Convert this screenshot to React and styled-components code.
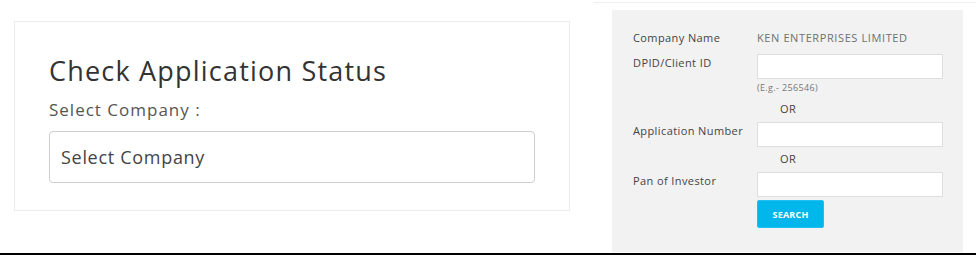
import React from "react";
import styled, { createGlobalStyle } from "styled-components";

const GlobalStyle = createGlobalStyle`
  html, body {
    margin: 0;
    padding: 0;
    background: #ffffff;
  }
  body {
    font-family: "Open Sans", "Liberation Sans", sans-serif;
  }
`;

export default function App() {
  return (
    <>
      <GlobalStyle />
      <Page>
        <LeftCol>
          <StatusCard>
            <Title>Check Application Status</Title>
            <SelectLabel>Select Company :</SelectLabel>
            <SelectBox>Select Company</SelectBox>
          </StatusCard>
        </LeftCol>
        <RightCol>
          <SearchPanel>
            <InfoRow>
              <FieldLabel>Company Name</FieldLabel>
              <CompanyValue>KEN ENTERPRISES LIMITED</CompanyValue>
            </InfoRow>
            <FieldRow $top={9}>
              <FieldLabel $pad>DPID/Client ID</FieldLabel>
              <FieldInput />
            </FieldRow>
            <Hint>(E.g.- 256546)</Hint>
            <OrText $top={8}>OR</OrText>
            <FieldRow $top={6}>
              <FieldLabel $pad>Application Number</FieldLabel>
              <FieldInput />
            </FieldRow>
            <OrText $top={5}>OR</OrText>
            <FieldRow $top={6}>
              <FieldLabel $pad>Pan of Investor</FieldLabel>
              <FieldInput />
            </FieldRow>
            <SearchButton>SEARCH</SearchButton>
          </SearchPanel>
        </RightCol>
      </Page>
    </>
  );
}

const Page = styled.div`
  width: 976px;
  height: 253px;
  display: flex;
  flex-direction: row;
  align-items: flex-start;
  border-bottom: 2px solid #000000;
  box-sizing: content-box;
  overflow: hidden;
`;

const LeftCol = styled.div`
  width: 593px;
  padding: 21px 0 0 14px;
  box-sizing: border-box;
`;

const StatusCard = styled.div`
  width: 556px;
  height: 190px;
  box-sizing: border-box;
  border: 1px solid #ececec;
  padding: 31px 34px 0 34px;
  display: flex;
  flex-direction: column;
`;

const Title = styled.div`
  font-size: 27px;
  line-height: 36px;
  letter-spacing: 1.2px;
  color: #333333;
  white-space: nowrap;
`;

const SelectLabel = styled.div`
  margin-top: 9px;
  font-size: 17px;
  line-height: 24px;
  letter-spacing: 1px;
  color: #555555;
`;

const SelectBox = styled.div`
  margin-top: 9px;
  height: 52px;
  box-sizing: border-box;
  border: 1px solid #cfcfcf;
  border-radius: 4px;
  padding: 0 11px;
  display: flex;
  align-items: center;
  font-size: 18px;
  letter-spacing: 0.7px;
  color: #444444;
`;

const RightCol = styled.div`
  flex: 1;
  margin-top: 2px;
  border-top: 1px solid #efefef;
  padding: 7px 0 0 19px;
`;

const SearchPanel = styled.div`
  width: 351px;
  height: 242px;
  box-sizing: border-box;
  background: #f2f2f2;
  padding: 21px 0 0 21px;
  display: flex;
  flex-direction: column;
`;

const InfoRow = styled.div`
  display: grid;
  grid-template-columns: 124px 186px;
  align-items: center;
  height: 14px;
`;

const FieldRow = styled.div`
  display: grid;
  grid-template-columns: 124px 186px;
  align-items: start;
  margin-top: ${(p) => p.$top}px;
`;

const FieldLabel = styled.div`
  font-size: 11px;
  line-height: 14px;
  letter-spacing: 0.4px;
  color: #444444;
  padding-top: ${(p) => (p.$pad ? "2px" : "0")};
  white-space: nowrap;
`;

const CompanyValue = styled.div`
  font-size: 11px;
  line-height: 14px;
  letter-spacing: 0.6px;
  color: #707070;
  white-space: nowrap;
`;

const FieldInput = styled.div`
  height: 25px;
  box-sizing: border-box;
  background: #ffffff;
  border: 1px solid #dedede;
`;

const Hint = styled.div`
  margin: 3px 0 0 124px;
  font-size: 9px;
  line-height: 12px;
  letter-spacing: 0.35px;
  color: #777777;
`;

const OrText = styled.div`
  margin: ${(p) => p.$top}px 0 0 147px;
  font-size: 11px;
  line-height: 14px;
  letter-spacing: 0.4px;
  color: #444444;
`;

const SearchButton = styled.div`
  margin: 3px 0 0 124px;
  width: 67px;
  height: 28px;
  box-sizing: border-box;
  background: #00b6ea;
  border: 1px solid #1fc0ef;
  border-radius: 2px;
  color: #ffffff;
  font-size: 9px;
  font-weight: 700;
  letter-spacing: 0.2px;
  display: flex;
  align-items: center;
  justify-content: center;
`;
